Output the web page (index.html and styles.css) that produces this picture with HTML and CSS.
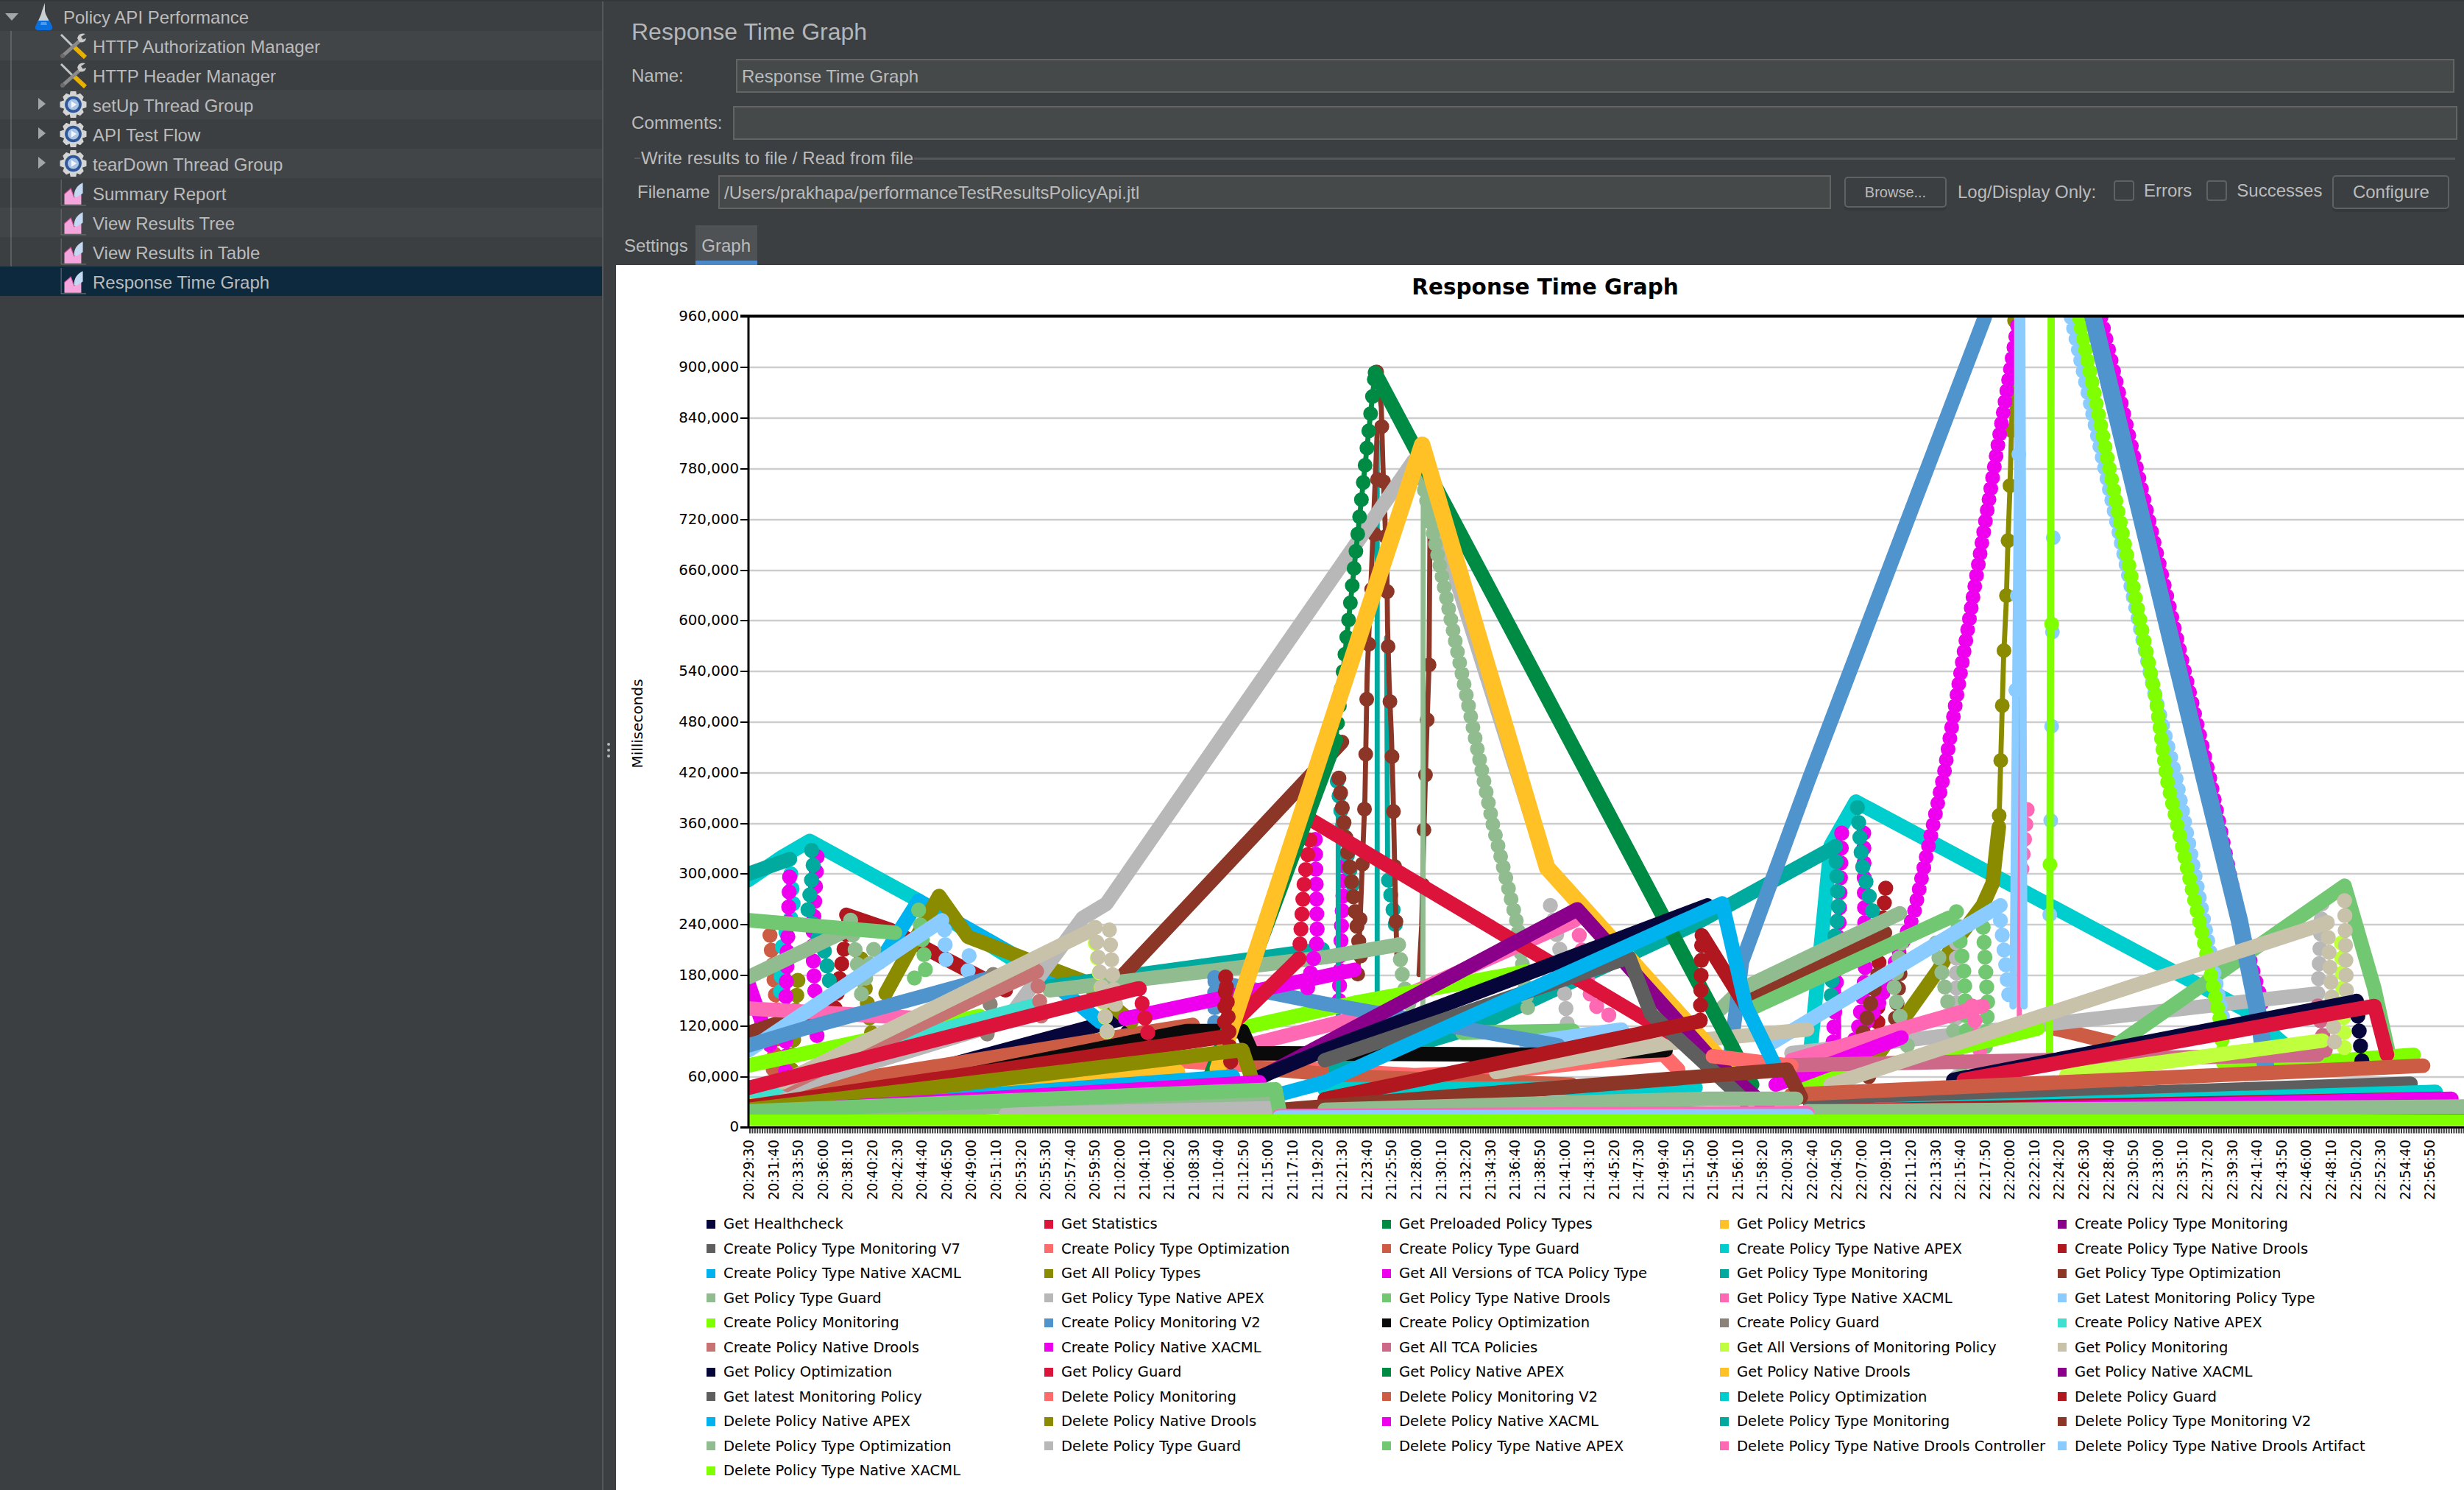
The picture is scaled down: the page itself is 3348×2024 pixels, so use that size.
FILE: index.html
```html
<!DOCTYPE html>
<html lang="en">
<head>
<meta charset="utf-8">
<title>Response Time Graph</title>
<link rel="stylesheet" href="styles.css">
</head>
<body>
<svg class="defs" width="0" height="0" aria-hidden="true">
  <defs>
    <symbol id="flask" viewBox="0 0 25 37">
      <path d="M10 11 L14 0 L14 11 L15 15 L23 31 Q25 36 20 36 L5 36 Q0 36 2 31 L9 15 Z" fill="#c9ced2"/>
      <path d="M5 24 L20 24 L24 32 Q25 37 20 37 L5 37 Q0 37 1 32 Z" fill="#0a6fdc"/>
      <path d="M9 26 L16 26 L17 30 L8 30 Z" fill="#4a9bf0"/>
    </symbol>
    <symbol id="tools" viewBox="0 0 37 36">
      <path d="M2 3 L19 20" stroke="#c4c4c4" stroke-width="3" fill="none"/>
      <path d="M20 20 L35 34" stroke="#e8b000" stroke-width="6" fill="none"/>
      <path d="M31 8 L4 32" stroke="#8a8a8a" stroke-width="5" fill="none"/>
      <path d="M24 8 Q26 0 35 2 L29 6 L31 10 L36 8 Q35 15 27 13 Z" fill="#c9c9c9"/>
      <circle cx="4" cy="32" r="3" fill="#6c6c6c"/>
    </symbol>
    <symbol id="gear" viewBox="0 0 38 38">
      <path d="M15 0 H23 L24 5 L29 3 L34 8 L32 13 L38 15 V23 L32 25 L34 30 L29 35 L24 33 L23 38 H15 L14 33 L9 35 L4 30 L6 25 L0 23 V15 L6 13 L4 8 L9 3 L14 5 Z" fill="#d4d4d4"/>
      <circle cx="19" cy="19" r="12" fill="#2f5797"/>
      <circle cx="19" cy="19" r="8" fill="#a9c3e6"/>
      <path d="M16 14 L24 19 L16 24 Z" fill="#f2f6fb"/>
    </symbol>
    <symbol id="graph" viewBox="0 0 32 33">
      <path d="M1 0 V32 H32" stroke="#6a6c6e" stroke-width="1" fill="none"/>
      <path d="M5 31 V18 L13 11 L17 22 L26 16 V31 Z" fill="#f4a6dc"/>
      <path d="M5 18 L13 11 L17 22 L26 16" stroke="#d0509f" stroke-width="1" fill="none"/>
      <path d="M17 21 Q17 9 28 4 V17 L20 22 Z" fill="#c3d8f2"/>
    </symbol>
  </defs>
</svg>
<div class="app">
  <aside class="side">
    <ul class="tree">
      <li class="row"><span class="caret-down"></span><svg class="ico flask"><use href="#flask"/></svg><span>Policy API Performance</span></li>
      <li class="row alt child"><svg class="ico tool"><use href="#tools"/></svg><span>HTTP Authorization Manager</span></li>
      <li class="row child"><svg class="ico tool"><use href="#tools"/></svg><span>HTTP Header Manager</span></li>
      <li class="row alt child"><span class="caret-right"></span><svg class="ico tool"><use href="#gear"/></svg><span>setUp Thread Group</span></li>
      <li class="row child"><span class="caret-right"></span><svg class="ico tool"><use href="#gear"/></svg><span>API Test Flow</span></li>
      <li class="row alt child"><span class="caret-right"></span><svg class="ico tool"><use href="#gear"/></svg><span>tearDown Thread Group</span></li>
      <li class="row child"><svg class="ico tool"><use href="#graph"/></svg><span>Summary Report</span></li>
      <li class="row alt child"><svg class="ico tool"><use href="#graph"/></svg><span>View Results Tree</span></li>
      <li class="row child"><svg class="ico tool"><use href="#graph"/></svg><span>View Results in Table</span></li>
      <li class="row child selected"><svg class="ico tool"><use href="#graph"/></svg><span>Response Time Graph</span></li>
    </ul>
  </aside>
  <main class="main">
    <h1 class="title">Response Time Graph</h1>
    <div class="field name-row"><label class="lab-name">Name:</label><div class="input">Response Time Graph</div></div>
    <div class="field comments-row"><label class="lab-comments">Comments:</label><div class="input"></div></div>
    <div class="group"><span class="rule-short"></span><span>Write results to file / Read from file</span><span class="rule-long"></span></div>
    <div class="field file-row">
      <label class="lab-file">Filename</label>
      <div class="input file-input">/Users/prakhapa/performanceTestResultsPolicyApi.jtl</div>
      <button class="btn browse">Browse...</button>
      <span class="log-label">Log/Display Only:</span>
      <span class="check first"></span><span class="check-label">Errors</span>
      <span class="check second"></span><span class="check-label">Successes</span>
      <button class="btn configure">Configure</button>
    </div>
    <div class="tabs"><span class="tab">Settings</span><span class="tab active">Graph</span></div>
    <div class="lower">
      <div class="gutter"><i></i><i></i><i></i></div>
      <section class="pane">
        <h2 class="chart-title">Response Time Graph</h2>
        <svg class="plot" width="2511" height="1140" viewBox="837 405 2511 1140">
          <defs><clipPath id="area"><rect x="1018" y="431" width="2330" height="1098"/></clipPath></defs>
          <path class="grid" d="M1018 499H3348M1018 568H3348M1018 637H3348M1018 706H3348M1018 775H3348M1018 843H3348M1018 912H3348M1018 981H3348M1018 1050H3348M1018 1119H3348M1018 1187H3348M1018 1256H3348M1018 1325H3348M1018 1394H3348M1018 1463H3348"/>
          <g clip-path="url(#area)">
            <g class="series" transform="scale(2.1352)">
              <polyline class="w k-n" points="476,712 714,648"/>
              <polyline class="f k-n" points="714,648 722,668 730,690"/>
              <polyline class="w k-sa" points="476,700 700,672 900,684 952,682 1058.5,670.7 1068,680.5"/>
              <polyline class="w k-si" points="476,697.8 759,652"/>
              <polyline class="f k-si" points="490,595 495,650 490,700"/>
              <polyline class="w k-si" points="796.8,679 861.8,685 1000,690"/>
              <polyline class="w k-si" points="1306,654 1346,663.7"/>
              <polyline class="w k-tq" points="476,560 498,545 515.3,535 584.6,573 660,620"/>
              <polyline class="w k-tq" points="1150,690 1165,538 1181,510 1428,642 1460,670"/>
              <polyline class="f k-tq" points="502.5,546.5 504,565 505,579 498,599.5 496.5,635.5"/>
              <polyline class="w k-fb" points="538.6,582 566.7,591.7 640,630"/>
              <polyline class="f k-fb" points="540,585 530,650"/>
              <polyline class="f k-fb" points="1200,565 1195,620 1195,670"/>
              <polyline class="w k-ds" points="560,612 584.6,573 656,613.5 700,650"/>
              <polyline class="w k-ol" points="563.6,632 597.6,570 616,596 689,624 720,650"/>
              <polyline class="f k-ol" points="503,690 508,620"/>
              <polyline class="f k-ol" points="548,610 555,660"/>
              <polyline class="t k-ol" points="1282,204 1280,276 1279,312 1277.7,347.5 1276.7,383.6 1275,419 1273,491 1272,526"/>
              <polyline class="e k-ol" points="1282,204 1280,276 1279,312 1277.7,347.5 1276.7,383.6 1275,419 1273,491 1272,526"/>
              <polyline class="w k-ol" points="1272,526 1268,562 1261.7,576 1243,601 1233.6,617 1193,674"/>
              <polyline class="w k-mg" points="476,625 490,665"/>
              <polyline class="d k-mg" points="1160,690 1195,640 1217.8,582 1237,493 1284.7,202"/>
              <polyline class="d k-mg" points="1337,202 1406.5,496 1426,590 1440,640"/>
              <polyline class="f k-mg" points="502.5,558 500,640 500,700"/>
              <polyline class="t k-mg" points="502.5,558 500,700"/>
              <polyline class="f k-mg" points="520,545 517,600 520,660"/>
              <polyline class="f k-mg" points="855.5,551 853.7,588.6 852,640"/>
              <polyline class="t k-mg" points="1170,530 1170,690"/>
              <polyline class="f k-mg" points="1172,530 1170,600 1165,690"/>
              <polyline class="f k-mg" points="1186,530 1187,620 1178,690"/>
              <polyline class="t k-te" points="876.4,281 876.4,632"/>
              <polyline class="t k-te" points="882.4,405.7 883,545"/>
              <polyline class="t k-te" points="851.6,515 851.6,690"/>
              <polyline class="w k-te" points="476,556 502.6,546.5"/>
              <polyline class="f k-te" points="516.5,541 517.5,550 515.7,566.6 514,580 525,606 526.4,615 527.8,624"/>
              <polyline class="f k-te" points="851,497 855,530 862,570"/>
              <polyline class="f k-te" points="883.6,560 888,588.6"/>
              <polyline class="w k-te" points="668,627.7 841.6,604"/>
              <polyline class="w k-te" points="850,680 936.7,654 1077,588.7 1168,538.6"/>
              <polyline class="f k-te" points="1168,538.6 1170,580 1167,600 1165,640"/>
              <polyline class="f k-te" points="1182,513.8 1185,550 1193,585.5"/>
              <polyline class="w k-br" points="476.7,657 513,645"/>
              <polyline class="w k-br" points="715,620 854,472"/>
              <polyline class="f k-br" points="852,495 856,530 860,560 866,610"/>
              <polyline class="t k-br" points="876,236.6 879,259 880,295 882.6,364 883,399 884,434.4 885.5,469.5 886.5,504 888,573.7 889,610"/>
              <polyline class="e k-br" points="876,236.6 879,259 880,295 882.6,364 883,399 884,434.4 885.5,469.5 886.5,504 888,573.7 889,610"/>
              <polyline class="t k-br" points="876.6,270 870,430 868.6,507.6 866,573.7 864,620"/>
              <polyline class="e k-br" points="876.6,305 870,430 868.6,507.6 866,573.7 864,620"/>
              <polyline class="t k-br" points="910,332.5 909.4,423 907.5,479 906,534 904.7,589 903,620"/>
              <polyline class="e k-br" points="909.4,423 907.5,479 906,534 904.7,589"/>
              <polyline class="w k-br" points="1114.7,633.7 1199.5,593.4"/>
              <polyline class="f k-br" points="1195,620 1185,660 1190,690"/>
              <polyline class="f k-br" points="1210,610 1205,660"/>
              <polyline class="w k-lg" points="476,700 640,650 689,584 704,575 899.7,293 905,300 984.5,552"/>
              <polyline class="f k-lg" points="986.6,576 992.6,604 996,635.5 997.4,652"/>
              <polyline class="w k-lg" points="1140,670 1475,632"/>
              <polyline class="f k-lg" points="1475,632 1478,568"/>
              <polyline class="f k-lg" points="1245,600 1245,690"/>
              <polyline class="f k-sg" points="541.3,585.4 545.6,613.5 549,638.3"/>
              <polyline class="f k-sg" points="556,604 549,629"/>
              <polyline class="w k-sg" points="476.7,621.5 539.6,591.6"/>
              <polyline class="t k-sg" points="905.7,297 905.5,642"/>
              <polyline class="d k-sg" points="905,305 950,524.5 966,590 973,648"/>
              <polyline class="w k-sg" points="668,630 843,609 890,601"/>
              <polyline class="f k-sg" points="890,601 893,625 897,640"/>
              <polyline class="w k-sg" points="1095,642 1108.5,629 1209,581"/>
              <polyline class="f k-sg" points="1210,600 1205,630 1215,670"/>
              <polyline class="f k-sg" points="1232,600 1240,640 1250,690"/>
              <polyline class="f k-pg" points="584.6,579 587.7,604 589,618 575.5,626"/>
              <polyline class="w k-pg" points="476.7,585.5 569.5,593.4"/>
              <polyline class="w k-pg" points="930.6,657 1001,655.7"/>
              <polyline class="w k-pg" points="1114.7,641.6 1240,584"/>
              <polyline class="f k-pg" points="1245,580 1250,620 1252,670"/>
              <polyline class="f k-pg" points="1262,590 1265,640 1262,690"/>
              <polyline class="w k-pg" points="1346.5,665 1492,563.5 1511,629 1520,670"/>
              <polyline class="w k-hp" points="476.7,641.6 588,648"/>
              <polyline class="w k-hp" points="799.6,663.6 862,648 1002,585.5"/>
              <polyline class="f k-hp" points="1005,595 1013,638 1027,648"/>
              <polyline class="w k-hp" points="1140,674.5 1261.7,640"/>
              <polyline class="t k-hp" points="1285,202 1285,660"/>
              <polyline class="f k-hp" points="1290,515 1286,560"/>
              <polyline class="f k-hp" points="1255,640 1262,680"/>
              <polyline class="w k-ls" points="476.7,668 599.5,585.5"/>
              <polyline class="f k-ls" points="601,591.5 602.3,616.7"/>
              <polyline class="f k-ls" points="616.7,608 615.8,621.5"/>
              <polyline class="w k-ls" points="971,663.5 1032,655"/>
              <polyline class="w k-ls" points="1127.4,663.6 1273,576"/>
              <polyline class="f k-ls" points="1273,585.5 1276,610 1279,640"/>
              <polyline class="s k-ls" points="1286.6,202 1288,640"/>
              <polyline class="s k-ls" points="1281,640 1284,292 1284,202"/>
              <polyline class="e2 k-ls" points="1284.7,289 1288,342"/>
              <polyline class="e2 k-ls" points="1283.7,379 1282.3,469"/>
              <polyline class="d k-ls" points="1318,202 1372,445 1385,496 1415,650"/>
              <polyline class="e2 k-ls" points="1306.6,342 1305.6,462 1304.4,582"/>
              <polyline class="w k-li" points="476.7,677.7 623.4,646.3"/>
              <polyline class="w k-li" points="790.6,654 862,638 971,618"/>
              <polyline class="w k-li" points="1149.5,690 1296.6,654.4"/>
              <polyline class="w k-li" points="1420,680 1536,671"/>
              <polyline class="s k-li" points="1305.3,202 1304.3,671"/>
              <polyline class="e3 k-li" points="1305.6,397 1304.5,550"/>
              <polyline class="d k-li" points="1323,202 1372,445 1379,496 1403,601 1413.5,652.6 1415,680"/>
              <polyline class="w k-st" points="476.7,665 513,654 632.4,621.5"/>
              <polyline class="f k-st" points="773,622 773,660"/>
              <polyline class="w k-st" points="773,624.5 843,638.5 991.5,665"/>
              <polyline class="w k-st" points="1100,680 1108.5,612 1151,496 1263,202"/>
              <polyline class="x k-st" points="1332,202 1403,496 1425,585.5 1437.6,648 1442,680"/>
              <polyline class="w k-bk" points="476,712 755,656 790.6,656 796.8,670 983,671 1060,668"/>
              <polyline class="f k-g2" points="632,620 628,660"/>
              <polyline class="w k-t2" points="476,700 543,670 659.6,639.3"/>
              <polyline class="w k-ro" points="501,690 659.6,618"/>
              <polyline class="f k-ro" points="659.6,618 663,650"/>
              <polyline class="w k-mg" points="716,648 862,617"/>
              <polyline class="f k-mg" points="837,534 838.3,598 832,629"/>
              <polyline class="w k-mg" points="1130,690 1210,660"/>
              <polyline class="w k-vr" points="1136.8,677.7 1475,671"/>
              <polyline class="f k-vr" points="1475,640 1480,670"/>
              <polyline class="w k-yg" points="1315,684 1478,662"/>
              <polyline class="f k-yg" points="697,600 705,660"/>
              <polyline class="f k-yg" points="1490,600 1492,670"/>
              <polyline class="w k-ta" points="498,688.5 695,591.5"/>
              <polyline class="f k-ta" points="697,590 700,620 705,660"/>
              <polyline class="f k-ta" points="706,591.6 708,620 710,640"/>
              <polyline class="w k-ta" points="952,682 1062,663.6 1150,655"/>
              <polyline class="w k-ta" points="1165,690 1481,587"/>
              <polyline class="f k-ta" points="1481,587 1485.6,663"/>
              <polyline class="f k-ta" points="1492,573 1493.6,648"/>
              <polyline class="w k-cr" points="781.6,654 826.6,610"/>
              <polyline class="f k-cr" points="826.6,610 828.5,582 829.5,566 831,552 835,525"/>
              <polyline class="w k-cr" points="835,522 1043,646 1090,672"/>
              <polyline class="w k-cr" points="476.7,692 723.6,629"/>
              <polyline class="f k-cr" points="725,629 730,655 735,680"/>
              <polyline class="w k-gr" points="760,712 850,471"/>
              <polyline class="t k-gr" points="850,471 875,237"/>
              <polyline class="g k-gr" points="850,471 875,237"/>
              <polyline class="w k-gr" points="875,237 1115,690"/>
              <polyline class="w k-go" points="775,680 905,283 984.5,552 1100,680"/>
              <polyline class="w k-go" points="476.7,704 749,682"/>
              <polyline class="w k-pu" points="790,692 1003.7,578.5 1086.6,671 1125,705"/>
              <polyline class="w k-n" points="790,690 843,668 1086.6,576"/>
              <polyline class="w k-n" points="1243,687 1499.6,637"/>
              <polyline class="f k-n" points="1499.6,637 1503,675"/>
              <polyline class="w k-cr" points="1249.7,687 1511,640 1519,671"/>
              <polyline class="w k-gy" points="843,674.5 1036.6,609 1050.6,645 1086.6,678 1110,700"/>
              <polyline class="w k-gy" points="1152,702.6 1534,689.4"/>
              <polyline class="w k-sa" points="1090,672 1140,678"/>
              <polyline class="w k-si" points="1140,696.4 1542,678"/>
              <polyline class="w k-tq" points="843,693 1079,692"/>
              <polyline class="w k-tq" points="1193,706 1550,694.6"/>
              <polyline class="w k-fb" points="476.7,704 779,659.5"/>
              <polyline class="f k-fb" points="779,659.5 780,620 784,690"/>
              <polyline class="w k-fb" points="843,699.3 1082,649.6"/>
              <polyline class="f k-fb" points="1082,649 1083,595"/>
              <polyline class="w k-fb" points="1083,595 1111,640"/>
              <polyline class="w k-fb" points="1152,707 1553,699"/>
              <polyline class="w k-ds" points="476.7,708 784.6,684.8"/>
              <polyline class="w k-ds" points="800,700 843,688.5 1096,574.7 1111,640 1130,679"/>
              <polyline class="w k-ol" points="476.7,706 790.6,668 796.8,687"/>
              <polyline class="w k-ol" points="1150,708 1568,706"/>
              <polyline class="w k-mg" points="476.7,708 801.4,688.5"/>
              <polyline class="w k-mg" points="1193,708 1560,699"/>
              <polyline class="w k-br" points="816,706 1137,680.5 1146,698"/>
              <polyline class="w k-sg" points="476.7,709 810,699"/>
              <polyline class="w k-sg" points="843,706 1086.6,699 1143,699"/>
              <polyline class="w k-sg" points="1150,707 1568,704"/>
              <polyline class="w k-lg" points="640,709 810,705"/>
              <polyline class="w k-pg" points="476.7,707 811.6,693 814.5,708.6"/>
              <polyline class="w k-hp" points="814,710 1150,708"/>
              <polyline class="w k-ls" points="814,711 1150,710"/>
              <polyline class="w2 k-li" points="476,712.6 1568,712.6"/>
            </g>
          </g>
          <g class="frame">
            <path class="axis-top" d="M1006 429.5H3348"/>
            <path class="axis-left" d="M1017 428V1533"/>
            <path class="axis-bottom" d="M1006 1531.5H3348"/>
            <path class="hatch" d="M1018 1536H3348"/>
          </g>
          <path class="ticks" d="M1006 499H1016M1006 568H1016M1006 637H1016M1006 706H1016M1006 775H1016M1006 843H1016M1006 912H1016M1006 981H1016M1006 1050H1016M1006 1119H1016M1006 1187H1016M1006 1256H1016M1006 1325H1016M1006 1394H1016M1006 1463H1016"/>
          <g class="ylabels">
            <text x="1004" y="435.5">960,000</text><text x="1004" y="504.5">900,000</text><text x="1004" y="573.5">840,000</text><text x="1004" y="642.5">780,000</text><text x="1004" y="711.5">720,000</text><text x="1004" y="780.5">660,000</text><text x="1004" y="848.5">600,000</text><text x="1004" y="917.5">540,000</text><text x="1004" y="986.5">480,000</text><text x="1004" y="1055.5">420,000</text><text x="1004" y="1124.5">360,000</text><text x="1004" y="1192.5">300,000</text><text x="1004" y="1261.5">240,000</text><text x="1004" y="1330.5">180,000</text><text x="1004" y="1399.5">120,000</text><text x="1004" y="1468.5">60,000</text><text x="1004" y="1537">0</text>
          </g>
          <text class="ytitle" transform="translate(873,983) rotate(-90)">Milliseconds</text>
        </svg>
        <div class="xlabels">
          <span>20:29:30</span><span>20:31:40</span><span>20:33:50</span><span>20:36:00</span><span>20:38:10</span><span>20:40:20</span><span>20:42:30</span><span>20:44:40</span><span>20:46:50</span><span>20:49:00</span><span>20:51:10</span><span>20:53:20</span><span>20:55:30</span><span>20:57:40</span><span>20:59:50</span><span>21:02:00</span><span>21:04:10</span><span>21:06:20</span><span>21:08:30</span><span>21:10:40</span><span>21:12:50</span><span>21:15:00</span><span>21:17:10</span><span>21:19:20</span><span>21:21:30</span><span>21:23:40</span><span>21:25:50</span><span>21:28:00</span><span>21:30:10</span><span>21:32:20</span><span>21:34:30</span><span>21:36:40</span><span>21:38:50</span><span>21:41:00</span><span>21:43:10</span><span>21:45:20</span><span>21:47:30</span><span>21:49:40</span><span>21:51:50</span><span>21:54:00</span><span>21:56:10</span><span>21:58:20</span><span>22:00:30</span><span>22:02:40</span><span>22:04:50</span><span>22:07:00</span><span>22:09:10</span><span>22:11:20</span><span>22:13:30</span><span>22:15:40</span><span>22:17:50</span><span>22:20:00</span><span>22:22:10</span><span>22:24:20</span><span>22:26:30</span><span>22:28:40</span><span>22:30:50</span><span>22:33:00</span><span>22:35:10</span><span>22:37:20</span><span>22:39:30</span><span>22:41:40</span><span>22:43:50</span><span>22:46:00</span><span>22:48:10</span><span>22:50:20</span><span>22:52:30</span><span>22:54:40</span><span>22:56:50</span>
        </div>
        <ul class="legend">
          <li><i class="k-n"></i>Get Healthcheck</li><li><i class="k-cr"></i>Get Statistics</li><li><i class="k-gr"></i>Get Preloaded Policy Types</li><li><i class="k-go"></i>Get Policy Metrics</li><li><i class="k-pu"></i>Create Policy Type Monitoring</li>
          <li><i class="k-gy"></i>Create Policy Type Monitoring V7</li><li><i class="k-sa"></i>Create Policy Type Optimization</li><li><i class="k-si"></i>Create Policy Type Guard</li><li><i class="k-tq"></i>Create Policy Type Native APEX</li><li><i class="k-fb"></i>Create Policy Type Native Drools</li>
          <li><i class="k-ds"></i>Create Policy Type Native XACML</li><li><i class="k-ol"></i>Get All Policy Types</li><li><i class="k-mg"></i>Get All Versions of TCA Policy Type</li><li><i class="k-te"></i>Get Policy Type Monitoring</li><li><i class="k-br"></i>Get Policy Type Optimization</li>
          <li><i class="k-sg"></i>Get Policy Type Guard</li><li><i class="k-lg"></i>Get Policy Type Native APEX</li><li><i class="k-pg"></i>Get Policy Type Native Drools</li><li><i class="k-hp"></i>Get Policy Type Native XACML</li><li><i class="k-ls"></i>Get Latest Monitoring Policy Type</li>
          <li><i class="k-li"></i>Create Policy Monitoring</li><li><i class="k-st"></i>Create Policy Monitoring V2</li><li><i class="k-bk"></i>Create Policy Optimization</li><li><i class="k-g2"></i>Create Policy Guard</li><li><i class="k-t2"></i>Create Policy Native APEX</li>
          <li><i class="k-ro"></i>Create Policy Native Drools</li><li><i class="k-mg"></i>Create Policy Native XACML</li><li><i class="k-vr"></i>Get All TCA Policies</li><li><i class="k-yg"></i>Get All Versions of Monitoring Policy</li><li><i class="k-ta"></i>Get Policy Monitoring</li>
          <li><i class="k-n"></i>Get Policy Optimization</li><li><i class="k-cr"></i>Get Policy Guard</li><li><i class="k-gr"></i>Get Policy Native APEX</li><li><i class="k-go"></i>Get Policy Native Drools</li><li><i class="k-pu"></i>Get Policy Native XACML</li>
          <li><i class="k-gy"></i>Get latest Monitoring Policy</li><li><i class="k-sa"></i>Delete Policy Monitoring</li><li><i class="k-si"></i>Delete Policy Monitoring V2</li><li><i class="k-tq"></i>Delete Policy Optimization</li><li><i class="k-fb"></i>Delete Policy Guard</li>
          <li><i class="k-ds"></i>Delete Policy Native APEX</li><li><i class="k-ol"></i>Delete Policy Native Drools</li><li><i class="k-mg"></i>Delete Policy Native XACML</li><li><i class="k-te"></i>Delete Policy Type Monitoring</li><li><i class="k-br"></i>Delete Policy Type Monitoring V2</li>
          <li><i class="k-sg"></i>Delete Policy Type Optimization</li><li><i class="k-lg"></i>Delete Policy Type Guard</li><li><i class="k-pg"></i>Delete Policy Type Native APEX</li><li><i class="k-hp"></i>Delete Policy Type Native Drools Controller</li><li><i class="k-ls"></i>Delete Policy Type Native Drools Artifact</li>
          <li><i class="k-li"></i>Delete Policy Type Native XACML</li>
        </ul>
      </section>
    </div>
  </main>
</div>
</body>
</html>
```

FILE: styles.css
```css
* { box-sizing: border-box; }
html, body { margin: 0; height: 100%; overflow: hidden; }
body { background: #3c3f41; color: #bbbbbb; font-family: "Liberation Sans", Arial, sans-serif; font-size: 24px; }
.defs { position: absolute; }
.app { display: flex; width: 3348px; height: 2024px; border-top: 2px solid #35383a; }

.side { width: 820px; flex: none; border-right: 2px solid #55585a; }
.tree { list-style: none; margin: 0; padding: 0; background: linear-gradient(#5a5d5f, #5a5d5f) 14px 40px / 2px 360px no-repeat; }
.row { position: relative; height: 40px; display: flex; align-items: center; padding: 3px 0 0 86px; line-height: 37px; background: transparent; white-space: nowrap; }
.row.alt { background: rgba(255, 255, 255, 0.035); }
.row.child { padding-left: 126px; }
.row.selected { background: #0d293e; }
.ico { position: absolute; display: block; }
.flask { left: 47px; top: 2px; width: 25px; height: 37px; }
.tool { left: 81px; top: 2px; width: 37px; height: 36px; }
.caret-down { position: absolute; left: 7px; top: 16px; width: 0; height: 0; border-left: 9px solid transparent; border-right: 9px solid transparent; border-top: 10px solid #a4a6a8; }
.caret-right { position: absolute; left: 52px; top: 11px; width: 0; height: 0; border-top: 8px solid transparent; border-bottom: 8px solid transparent; border-left: 10px solid #a4a6a8; }

.main { flex: 1; min-width: 0; display: flex; flex-direction: column; }
.title { margin: 20px 0 0 38px; height: 42px; font-weight: 400; font-size: 32px; line-height: 42px; color: #b4b6b8; }
.field { display: flex; align-items: center; height: 46px; }
.input { flex: 1; height: 46px; line-height: 44px; padding-left: 6px; background: #45494a; border: 2px solid #646464; white-space: nowrap; }
.name-row { margin: 16px 13px 0 38px; }
.lab-name { width: 142px; flex: none; }
.comments-row { margin: 18px 9px 0 38px; }
.lab-comments { width: 138px; flex: none; letter-spacing: 0.1px; }
.group { display: flex; align-items: center; height: 20px; margin: 15px 12px 0 42px; gap: 1px; letter-spacing: 0.1px; }
.rule-short { width: 8px; height: 2px; background: #55585a; flex: none; }
.rule-long { flex: 1; height: 3px; background: #55585a; }
.file-row { margin: 13px 0 0 46px; }
.lab-file { width: 110px; flex: none; }
.file-input { flex: none; width: 1512px; }
.btn { color: #bbbbbb; font-family: inherit; background: #3c3f41; border: 2px solid #5f6264; border-radius: 5px; padding: 0; box-shadow: 0 4px 0 #36393b; }
.browse { width: 139px; height: 42px; margin-left: 18px; font-size: 20px; }
.log-label { margin-left: 15px; width: 189px; flex: none; white-space: nowrap; }
.check { width: 28px; height: 28px; flex: none; border: 2px solid #5f6264; border-radius: 4px; margin-top: -4px; }
.check.first { margin-left: 23px; }
.check.second { margin-left: 20px; }
.check-label { margin-left: 13px; margin-top: -4px; white-space: nowrap; }
.configure { width: 159px; height: 46px; margin-left: 14px; font-size: 24px; }
.tabs { display: flex; height: 54px; margin: 22px 0 0 28px; gap: 10px; }
.tab { height: 54px; line-height: 56px; white-space: nowrap; }
.tab.active { width: 84px; text-align: center; background: #4e5254; border-bottom: 6px solid #4a88c7; }

.lower { flex: 1; display: flex; min-height: 0; }
.gutter { width: 17px; flex: none; display: flex; flex-direction: column; align-items: center; justify-content: center; gap: 4px; padding-bottom: 346px; padding-right: 3px; }
.gutter i { display: block; width: 4px; height: 4px; border-radius: 50%; background: #b4b6b8; }
.pane { flex: 1; min-width: 0; background: #ffffff; color: #000000; font-family: "DejaVu Sans", sans-serif; overflow: hidden; }
.chart-title { margin: 0; height: 45px; padding: 11px 0 0 14px; font-size: 29.5px; line-height: 38px; font-weight: 700; text-align: center; }
.plot { display: block; }
.grid { stroke: #cdcdcd; stroke-width: 2.5; fill: none; }
.series polyline { fill: none; stroke: currentColor; stroke-linejoin: round; stroke-linecap: round; }
.series .w { stroke-width: 9.2; }
.series .w.k-go { stroke-width: 10.5; }
.series .w2 { stroke-width: 7; stroke-linecap: butt; }
.series .x { stroke-width: 11; }
.series .s { stroke-width: 4.6; }
.series .t { stroke-width: 3.2; }
.series .d { stroke-width: 9.4; stroke-dasharray: 0 7; }
.series .f { stroke-width: 9.6; stroke-dasharray: 0 9.5; }
.series .g { stroke-width: 9.4; stroke-dasharray: 0 11; }
.series .e { stroke-width: 9.4; stroke-dasharray: 0 35; }
.series .e2 { stroke-width: 9.4; stroke-dasharray: 0 60; }
.series .e3 { stroke-width: 9.4; stroke-dasharray: 0 153; }
.frame path, .ticks { stroke: #000000; fill: none; }
.frame .axis-top { stroke-width: 4; }
.frame .axis-left { stroke-width: 3; }
.frame .axis-bottom { stroke-width: 3; }
.frame .hatch { stroke: #3c3c3c; stroke-width: 7; stroke-dasharray: 2 1.4; }
.ticks { stroke-width: 2; }
.ylabels text { font-size: 19.8px; text-anchor: end; fill: #000000; }
.ytitle { font-size: 20px; text-anchor: middle; font-weight: 400; fill: #000000; }
.xlabels { display: flex; height: 101px; padding: 3px 0 0 164px; overflow: hidden; }
.xlabels span { display: block; flex: none; width: 33.6px; height: 82px; line-height: 33.6px; writing-mode: vertical-rl; transform: rotate(180deg); text-align: right; font-family: "DejaVu Sans Condensed", "Liberation Sans", sans-serif; font-size: 20.3px; white-space: nowrap; }
.legend { list-style: none; margin: 0; padding: 0 0 0 123px; display: grid; grid-template-columns: repeat(5, 459px); grid-auto-rows: 33.5px; font-size: 19.6px; }
.legend li { display: flex; align-items: center; white-space: nowrap; color: #000000; }
.legend i { display: block; width: 12px; height: 12px; margin-right: 11px; flex: none; background: currentColor; }

.k-n { color: #06063a; }
.k-cr { color: #dc143c; }
.k-gr { color: #008b45; }
.k-go { color: #ffc125; }
.k-pu { color: #8b008b; }
.k-gy { color: #5e5e5e; }
.k-sa { color: #ff6a6a; }
.k-si { color: #cd5c45; }
.k-tq { color: #00cdcd; }
.k-fb { color: #b0171f; }
.k-ds { color: #00b2ee; }
.k-ol { color: #8b8b00; }
.k-mg { color: #ee00ee; }
.k-te { color: #00aa9f; }
.k-br { color: #8b3626; }
.k-sg { color: #90bc90; }
.k-lg { color: #b8b8b8; }
.k-pg { color: #72c872; }
.k-hp { color: #ff69b4; }
.k-ls { color: #8accff; }
.k-li { color: #7fff00; }
.k-st { color: #4f94cd; }
.k-bk { color: #0a0a0a; }
.k-g2 { color: #8b8378; }
.k-t2 { color: #40e0d0; }
.k-ro { color: #c87373; }
.k-vr { color: #cd6889; }
.k-yg { color: #c0ff3e; }
.k-ta { color: #c8c2aa; }
```
